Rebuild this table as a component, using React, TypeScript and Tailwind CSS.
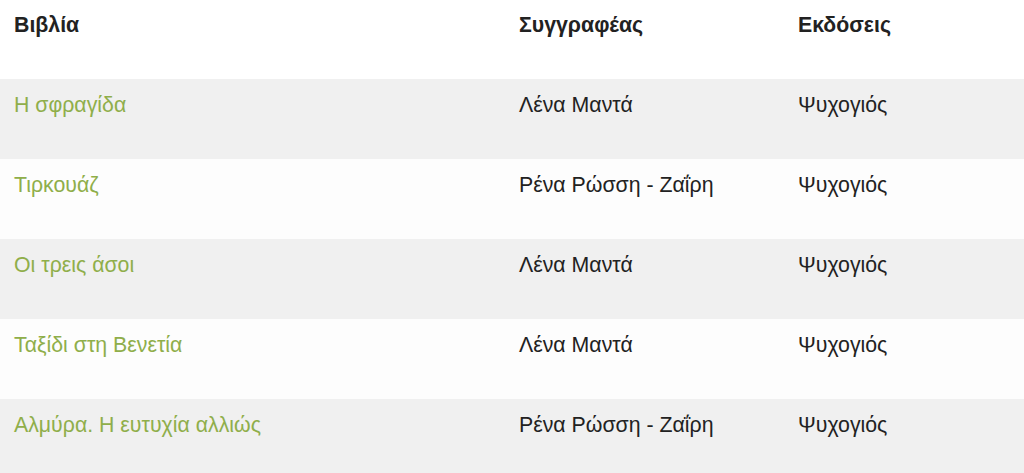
const rows = [
  { title: "Η σφραγίδα", author: "Λένα Μαντά", publisher: "Ψυχογιός" },
  { title: "Τιρκουάζ", author: "Ρένα Ρώσση - Ζαΐρη", publisher: "Ψυχογιός" },
  { title: "Οι τρεις άσοι", author: "Λένα Μαντά", publisher: "Ψυχογιός" },
  { title: "Ταξίδι στη Βενετία", author: "Λένα Μαντά", publisher: "Ψυχογιός" },
  { title: "Αλμύρα. Η ευτυχία αλλιώς", author: "Ρένα Ρώσση - Ζαΐρη", publisher: "Ψυχογιός" },
];

export default function App() {
  return (
    <div className="min-h-screen bg-white font-['Liberation_Sans',Arial,sans-serif] text-[21.3px] text-[#222]">
      {/* Header */}
      <div className="grid h-[79px] grid-cols-[505px_279px_1fr] bg-white pt-[10px] font-bold">
        <div className="px-[14px]">Βιβλία</div>
        <div className="px-[14px]">Συγγραφέας</div>
        <div className="px-[14px]">Εκδόσεις</div>
      </div>

      {rows.map((r, i) => (
        <div
          key={r.title}
          className={
            i % 2 === 0
              ? "grid h-[80px] grid-cols-[505px_279px_1fr] bg-[#f0f0f0] pt-[11px]"
              : "grid h-[80px] grid-cols-[505px_279px_1fr] bg-[#fdfdfd] pt-[11px]"
          }
        >
          <div className="px-[14px]">
            <a href="#" className="text-[#8fae4a]">{r.title}</a>
          </div>
          <div className="px-[14px]">{r.author}</div>
          <div className="px-[14px]">{r.publisher}</div>
        </div>
      ))}
    </div>
  );
}
